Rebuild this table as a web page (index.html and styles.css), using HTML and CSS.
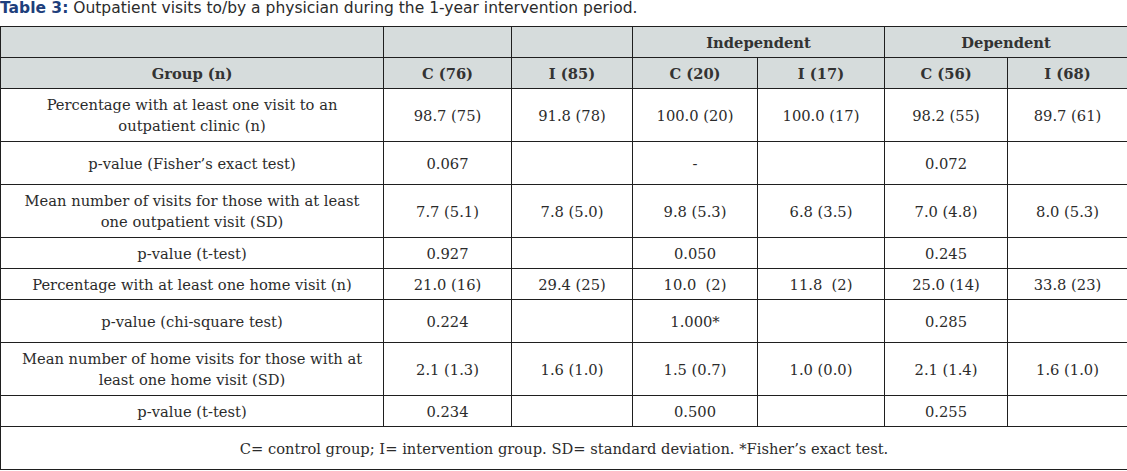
FILE: index.html
```html
<!DOCTYPE html>
<html>
<head>
<meta charset="utf-8">
<link rel="stylesheet" href="styles.css">
</head>
<body>
<p class="caption"><span class="label">Table 3:</span> Outpatient visits to/by a physician during the 1-year intervention period.</p>
<table class="data">
  <colgroup>
    <col class="c1"><col class="c2"><col class="c3"><col class="c4"><col class="c5"><col class="c6"><col class="c7">
  </colgroup>
  <thead>
    <tr class="r-short">
      <th></th><th></th><th></th>
      <th colspan="2">Independent</th>
      <th colspan="2">Dependent</th>
    </tr>
    <tr class="r-short">
      <th>Group (n)</th><th>C (76)</th><th>I (85)</th><th>C (20)</th><th>I (17)</th><th>C (56)</th><th>I (68)</th>
    </tr>
  </thead>
  <tbody>
    <tr class="r-tall">
      <td>Percentage with at least one visit to an<br>outpatient clinic (n)</td>
      <td>98.7 (75)</td><td>91.8 (78)</td><td>100.0 (20)</td><td>100.0 (17)</td><td>98.2 (55)</td><td>89.7 (61)</td>
    </tr>
    <tr class="r-mid">
      <td>p-value (Fisher’s exact test)</td>
      <td>0.067</td><td></td><td>-</td><td></td><td>0.072</td><td></td>
    </tr>
    <tr class="r-tall">
      <td>Mean number of visits for those with at least<br>one outpatient visit (SD)</td>
      <td>7.7 (5.1)</td><td>7.8 (5.0)</td><td>9.8 (5.3)</td><td>6.8 (3.5)</td><td>7.0 (4.8)</td><td>8.0 (5.3)</td>
    </tr>
    <tr class="r-short">
      <td>p-value (t-test)</td>
      <td>0.927</td><td></td><td>0.050</td><td></td><td>0.245</td><td></td>
    </tr>
    <tr class="r-short">
      <td>Percentage with at least one home visit (n)</td>
      <td>21.0 (16)</td><td>29.4 (25)</td><td>10.0&nbsp; (2)</td><td>11.8&nbsp; (2)</td><td>25.0 (14)</td><td>33.8 (23)</td>
    </tr>
    <tr class="r-mid">
      <td>p-value (chi-square test)</td>
      <td>0.224</td><td></td><td>1.000*</td><td></td><td>0.285</td><td></td>
    </tr>
    <tr class="r-tall">
      <td>Mean number of home visits for those with at<br>least one home visit (SD)</td>
      <td>2.1 (1.3)</td><td>1.6 (1.0)</td><td>1.5 (0.7)</td><td>1.0 (0.0)</td><td>2.1 (1.4)</td><td>1.6 (1.0)</td>
    </tr>
    <tr class="r-short">
      <td>p-value (t-test)</td>
      <td>0.234</td><td></td><td>0.500</td><td></td><td>0.255</td><td></td>
    </tr>
    <tr class="r-mid">
      <td colspan="7" class="note">C= control group; I= intervention group. SD= standard deviation. *Fisher’s exact test.</td>
    </tr>
  </tbody>
</table>
</body>
</html>
```

FILE: styles.css
```css
html, body {
  margin: 0;
  padding: 0;
  background: #ffffff;
}

.caption {
  margin: 0;
  height: 26px;
  font-family: "DejaVu Sans", "Liberation Sans", Arial, sans-serif;
  font-size: 15.5px;
  line-height: 17px;
  color: #2b2b2b;
  white-space: nowrap;
}

.caption .label {
  font-weight: bold;
  color: #1e3f7c;
}

.data {
  border-collapse: collapse;
  table-layout: fixed;
  width: 1127px;
  font-family: "DejaVu Serif", "Liberation Serif", serif;
  font-size: 14.7px;
  line-height: 21px;
  color: #2b2b2b;
}

.c1 { width: 383px; }
.c2 { width: 128px; }
.c3 { width: 121px; }
.c4 { width: 125px; }
.c5 { width: 127px; }
.c6 { width: 123px; }
.c7 { width: 120px; }

.data th,
.data td {
  border: 1px solid #1f1f1f;
  padding: 0 2px;
  text-align: center;
  vertical-align: middle;
  white-space: nowrap;
}

.data th {
  background: #d6dcdc;
  font-weight: bold;
  color: #333333;
}

.r-short { height: 31px; }
.r-mid { height: 43px; }
.r-tall { height: 53px; }
```
